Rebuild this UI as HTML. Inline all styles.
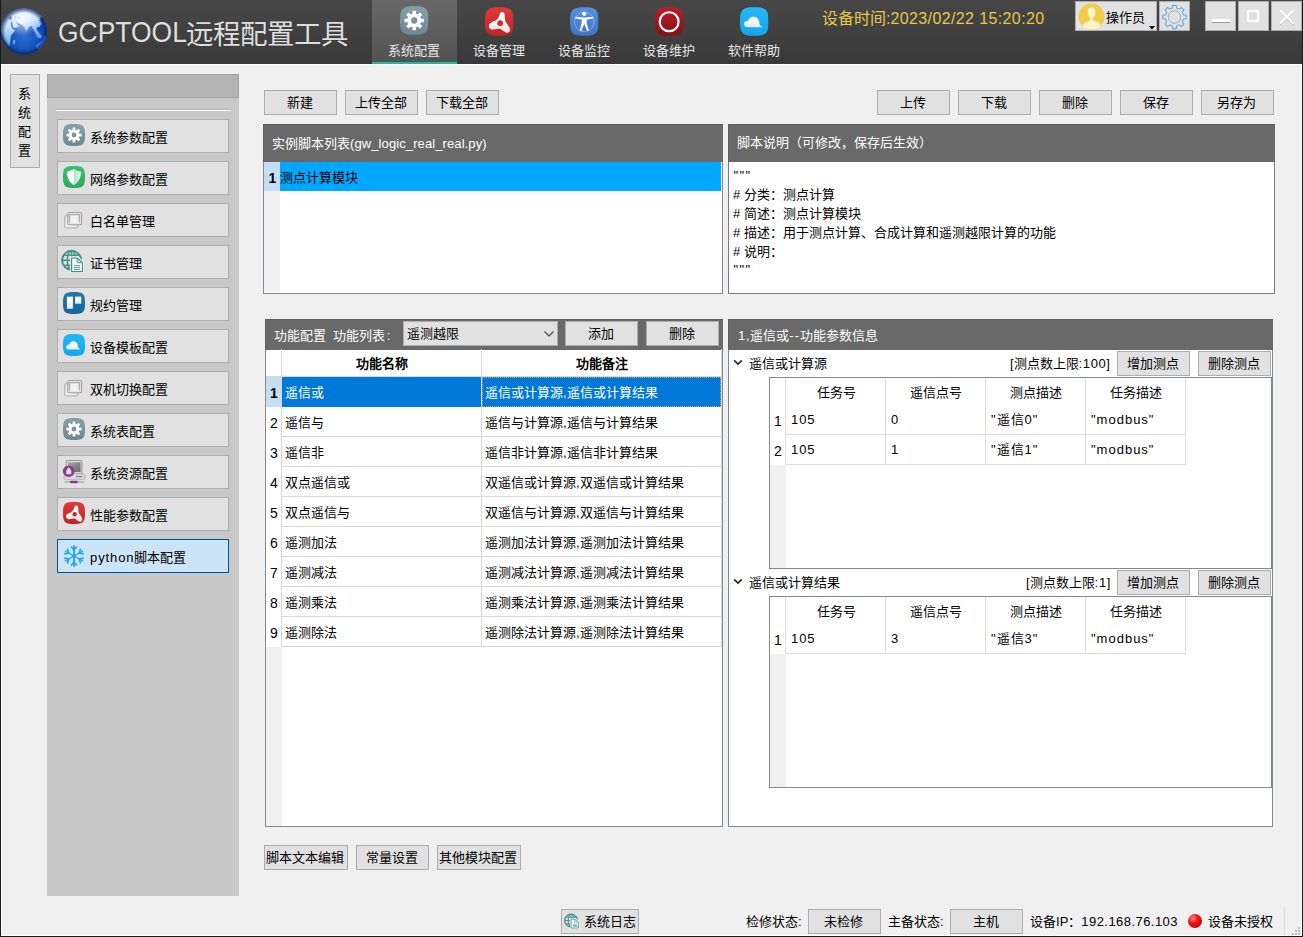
<!DOCTYPE html>
<html lang="zh-CN">
<head>
<meta charset="utf-8">
<title>GCPTOOL</title>
<style>
*{box-sizing:border-box;margin:0;padding:0}
html,body{width:1303px;height:937px;overflow:hidden}
body{position:relative;background:#f0f0f0;font-family:"Liberation Sans",sans-serif;font-size:13px;color:#000}
.a{position:absolute}
.t{position:absolute;white-space:nowrap;line-height:20px;height:20px}
/* window frame */
#frameL{left:0;top:0;width:1px;height:937px;background:#1a1a1a}
#frameR{left:1302px;top:0;width:1px;height:937px;background:#1a1a1a}
#frameB{left:0;top:936px;width:1303px;height:1px;background:#1a1a1a}
#inner{left:1px;top:64px;width:1301px;height:872px;border:1px solid #fff}
/* header */
#hdr{left:0;top:0;width:1303px;height:64px;background:linear-gradient(#474747,#393939)}
#title{left:58px;top:12px;font-size:29px;line-height:40px;height:40px;color:#dedede;transform:scaleX(0.912);transform-origin:0 50%}
#title2{left:185.5px;top:15px;font-size:27.5px;line-height:40px;height:40px;color:#dedede}
.tab{position:absolute;top:0;width:85px;height:64px}
.tab.on{background:linear-gradient(#686868,#535353);border-bottom:2px solid #1abc9c}
.tab .lbl{position:absolute;left:-1px;top:41px;width:85px;text-align:center;color:#e6e6e6;font-size:13px;line-height:20px}
.tab svg{position:absolute;left:28px;top:7px}
.tab.on svg{top:6px}
#time,#time2{top:8px;font-size:16px;line-height:22px;height:22px;color:#e8c84a}
.wb{position:absolute;top:1px;height:30px;background:#e1e1e1;border:1px solid #adadad}
/* generic button */
.btn{position:absolute;background:#e1e1e1;border:1px solid #adadad;text-align:center;white-space:nowrap;font-size:13px;line-height:24px;height:25px;width:73px;color:#000;padding-right:2px}
/* sidebar */
#vtab{left:10px;top:74px;width:30px;height:94px;background:#e1e1e1;border:1px solid #adadad;text-align:center;line-height:19px;padding-top:9px;padding-right:2px;font-size:13px}
#side{left:47px;top:74px;width:192px;height:822px;background:#c8c8c8}
#sidetop{left:47px;top:74px;width:192px;height:24px;background:#b4b4b4;border:1px solid #a2a2a2}
#sidehr{left:56px;top:109px;width:174px;height:2px;border-top:1px solid #b8b8b8;background:#fff}
.sb{position:absolute;left:57px;width:172px;height:34px;background:#e1e1e1;border:1px solid #adadad;font-size:13px;line-height:34px;padding-left:32px;padding-top:1px;white-space:nowrap;overflow:hidden}
.sb svg{position:absolute}
.sb.sel{background:#cce4f7;border-color:#005499}
/* panels */
.ph{position:absolute;background:#696969;color:#fff;font-size:13px;white-space:nowrap;box-shadow:inset 1px 1px 0 #5f5f5f}
.pb{position:absolute;background:#fff;border:1px solid #828790}

.rn{left:266px;width:16px;text-align:center;font-size:14px}
.c1{left:285px}.c2{left:485px}
.gv{width:1px;background:#dcdcdc}.gh{height:1px;background:#dcdcdc}
.h1{left:786px;width:100px;text-align:center}.h2{left:886px;width:100px;text-align:center}.h3{left:986px;width:100px;text-align:center}.h4{left:1086px;width:100px;text-align:center}
.r0{left:770px;width:16px;text-align:center;font-size:14px}
.d1{left:791px;letter-spacing:0.9px}.d2{left:891px}.d3{left:991px;letter-spacing:1px}.d4{left:1091px;letter-spacing:1px}
</style>
</head>
<body>
<!--DEFS--><svg width="0" height="0" style="position:absolute">
<defs>
<linearGradient id="gGear" x1="0" y1="0" x2="0" y2="1"><stop offset="0" stop-color="#88a0aa"/><stop offset="1" stop-color="#6d8892"/></linearGradient>
<linearGradient id="gRed" x1="0" y1="0" x2="0" y2="1"><stop offset="0" stop-color="#e03a3a"/><stop offset="1" stop-color="#bd2426"/></linearGradient>
<linearGradient id="gBlue" x1="0" y1="0" x2="0" y2="1"><stop offset="0" stop-color="#5690de"/><stop offset="1" stop-color="#3f74c6"/></linearGradient>
<linearGradient id="gDred" x1="0" y1="0" x2="0" y2="1"><stop offset="0" stop-color="#bb1d26"/><stop offset="1" stop-color="#861017"/></linearGradient>
<linearGradient id="gSky" x1="0" y1="0" x2="0" y2="1"><stop offset="0" stop-color="#22b8f8"/><stop offset="1" stop-color="#16a6e8"/></linearGradient>
<linearGradient id="gGreen" x1="0" y1="0" x2="0" y2="1"><stop offset="0" stop-color="#3abf72"/><stop offset="1" stop-color="#2daa60"/></linearGradient>
<linearGradient id="gTre" x1="0" y1="0" x2="0" y2="1"><stop offset="0" stop-color="#2079ad"/><stop offset="1" stop-color="#17669a"/></linearGradient>
<linearGradient id="gShR" x1="0" y1="0" x2="1" y2="0"><stop offset="0" stop-color="#a9e2c1"/><stop offset="1" stop-color="#f4fcf7"/></linearGradient>
<linearGradient id="gWb" x1="0" y1="0" x2="0" y2="1"><stop offset="0.3" stop-color="#fff"/><stop offset="1" stop-color="#d4ecfb"/></linearGradient>
<linearGradient id="gWr" x1="0" y1="0" x2="0" y2="1"><stop offset="0.35" stop-color="#fff"/><stop offset="1" stop-color="#f7dcdc"/></linearGradient>
<linearGradient id="gScr" x1="0" y1="0" x2="1" y2="1"><stop offset="0" stop-color="#a8a8a8"/><stop offset="1" stop-color="#6a6a6a"/></linearGradient>
<radialGradient id="gOcean" cx="0.5" cy="0.62" r="0.6"><stop offset="0" stop-color="#2d6fd2"/><stop offset="0.6" stop-color="#0f4db4"/><stop offset="1" stop-color="#083a96"/></radialGradient>
<linearGradient id="gLand" x1="0.2" y1="0" x2="0.75" y2="1"><stop offset="0" stop-color="#d2eaff"/><stop offset="0.4" stop-color="#bcdcff"/><stop offset="0.8" stop-color="#5e9af0"/><stop offset="1" stop-color="#4a8cf2"/></linearGradient>
<radialGradient id="gShine" cx="0.47" cy="0.2" r="0.4"><stop offset="0" stop-color="#fff" stop-opacity="0.9"/><stop offset="1" stop-color="#fff" stop-opacity="0"/></radialGradient>
<radialGradient id="gRim" cx="0.5" cy="0.5" r="0.5"><stop offset="0.8" stop-color="#04245f" stop-opacity="0"/><stop offset="1" stop-color="#04245f" stop-opacity="0.75"/></radialGradient>
<clipPath id="cGlobe"><circle cx="24" cy="24.5" r="23"/></clipPath>

<symbol id="i-gear" viewBox="0 0 28 28"><path d="M14.00 0 C25.76 0 28 2.24 28 14.00 C28 25.76 25.76 28 14.00 28 C2.24 28 0 25.76 0 14.00 C0 2.24 2.24 0 14.00 0Z" fill="url(#gGear)"/><g fill="#fff"><circle cx="14" cy="14" r="6.9"/><rect x="12.25" y="4.4" width="3.5" height="19.2" rx="0.6" transform="rotate(0.0 14 14)"/><rect x="12.25" y="4.4" width="3.5" height="19.2" rx="0.6" transform="rotate(45.0 14 14)"/><rect x="12.25" y="4.4" width="3.5" height="19.2" rx="0.6" transform="rotate(90.0 14 14)"/><rect x="12.25" y="4.4" width="3.5" height="19.2" rx="0.6" transform="rotate(135.0 14 14)"/></g><circle cx="14" cy="14" r="3.1" fill="#7a949e"/></symbol>

<symbol id="i-air" viewBox="0 0 28 28"><path d="M14.00 0 C25.76 0 28 2.24 28 14.00 C28 25.76 25.76 28 14.00 28 C2.24 28 0 25.76 0 14.00 C0 2.24 2.24 0 14.00 0Z" fill="url(#gRed)"/><path d="M16.30 4.90 C17.70 4.47 17.63 4.17 18.70 5.70 C19.77 7.23 19.10 6.97 19.50 9.50 C19.90 12.03 18.97 10.73 19.90 13.30 C20.83 15.87 20.80 14.53 22.30 17.20 C23.80 19.87 24.27 18.73 24.40 21.30 C24.53 23.87 24.57 24.07 22.70 24.90 C20.83 25.73 21.43 25.00 18.80 23.80 C16.17 22.60 17.73 22.00 14.80 21.30 C11.87 20.60 12.97 21.63 10.00 21.70 C7.03 21.77 7.93 22.63 5.90 21.50 C3.87 20.37 3.77 20.43 3.90 18.30 C4.03 16.17 4.13 16.83 6.30 15.10 C8.47 13.37 8.17 14.70 10.40 13.10 C12.63 11.50 11.63 12.33 13.00 10.30 C14.37 8.27 13.40 8.80 14.50 7.00 C15.60 5.20 14.90 5.33 16.30 4.90Z" fill="url(#gWr)"/><circle cx="14.9" cy="15.6" r="2.8" fill="#cf2c2e"/></symbol>

<symbol id="i-access" viewBox="0 0 28 28"><path d="M14.00 0 C25.76 0 28 2.24 28 14.00 C28 25.76 25.76 28 14.00 28 C2.24 28 0 25.76 0 14.00 C0 2.24 2.24 0 14.00 0Z" fill="url(#gBlue)"/><circle cx="14" cy="14.3" r="9.6" fill="none" stroke="#fff" stroke-opacity="0.45" stroke-width="0.7"/><g fill="#fff"><circle cx="14" cy="6.4" r="2.1"/><path d="M5.2 9.3 L13 10 L15 10 L22.8 9.3 L22.9 10.7 L16.3 12.3 L16.6 16 L18.6 23.2 L17.1 23.7 L14 16.5 L10.9 23.7 L9.4 23.2 L11.4 16 L11.7 12.3 L5.1 10.7Z"/></g></symbol>

<symbol id="i-o" viewBox="0 0 28 28"><path d="M14.00 0 C25.76 0 28 2.24 28 14.00 C28 25.76 25.76 28 14.00 28 C2.24 28 0 25.76 0 14.00 C0 2.24 2.24 0 14.00 0Z" fill="url(#gDred)"/><circle cx="13.9" cy="14.2" r="9.3" fill="none" stroke="#fff" stroke-width="2.1"/></symbol>

<symbol id="i-cloud" viewBox="0 0 28 28"><path d="M14.00 0 C25.76 0 28 2.24 28 14.00 C28 25.76 25.76 28 14.00 28 C2.24 28 0 25.76 0 14.00 C0 2.24 2.24 0 14.00 0Z" fill="url(#gSky)"/><path d="M7.4 19.6 C4.6 19.6 3.6 17.5 4.1 15.8 C4.6 14.1 6.3 13.3 7.9 13.7 C8.4 10.9 10.8 9.1 13.6 9.3 C16.8 9.5 18.9 12 19 15 C19 17 19.8 18.6 22.6 19.6Z" fill="url(#gWb)"/></symbol>

<symbol id="i-shield" viewBox="0 0 28 28"><path d="M14.00 0 C25.76 0 28 2.24 28 14.00 C28 25.76 25.76 28 14.00 28 C2.24 28 0 25.76 0 14.00 C0 2.24 2.24 0 14.00 0Z" fill="url(#gGreen)"/><path d="M14 3.9 C11.2 6 8 6.9 5 7.2 C5 14.5 8 20.5 14 24.3Z" fill="#fff"/><path d="M14 3.9 C16.8 6 20 6.9 23 7.2 C23 14.5 20 20.5 14 24.3Z" fill="url(#gShR)"/></symbol>

<symbol id="i-trello" viewBox="0 0 28 28"><path d="M14.00 0 C25.76 0 28 2.24 28 14.00 C28 25.76 25.76 28 14.00 28 C2.24 28 0 25.76 0 14.00 C0 2.24 2.24 0 14.00 0Z" fill="url(#gTre)"/><rect x="5" y="5.9" width="7.6" height="15.5" fill="url(#gWb)"/><rect x="15.3" y="5.9" width="7.9" height="9" fill="url(#gWb)"/></symbol>

<symbol id="i-squares" viewBox="0 0 22 22"><rect x="2.8" y="7.7" width="12.8" height="12.2" rx="1.2" fill="#ececec" stroke="#a9a9a9" stroke-width="1"/><rect x="5.8" y="4.5" width="13.8" height="12.2" rx="1.2" fill="#e4e4e4" stroke="#a2a2a2" stroke-width="1.1"/><rect x="7.6" y="6.8" width="9.8" height="8" fill="#f2f2f2"/><path d="M7.6 14.8 V6.6 H17.6 V14.5" fill="none" stroke="#acacac" stroke-width="1.1"/><path d="M16.4 7.4 V13.6" stroke="#dcdcdc" stroke-width="1.2"/></symbol>

<symbol id="i-cert" viewBox="0 0 24 24"><g fill="none" stroke="#46938e"><circle cx="10.6" cy="11.3" r="9.5" stroke-width="2"/><ellipse cx="10.6" cy="11.3" rx="4.3" ry="9.5" stroke-width="1.5"/><path d="M10.6 1.7 V21 M1 11.3 H20.2 M2.8 6.3 H18.4 M2.8 16.3 H18.4" stroke-width="1.5"/></g><path d="M10.3 8.6 H16.6 L21.9 13.4 V22.9 H10.3Z" fill="#fff" stroke="#fff" stroke-width="2.2"/><path d="M10.6 9.2 H16.2 L21.5 13.8 V22.6 H10.6Z" fill="#fff" stroke="#46938e" stroke-width="1.3"/><path d="M16.2 9.2 V13.8 H21.5" fill="none" stroke="#46938e" stroke-width="1"/><path d="M13 16.5 H19.2 M13 18.5 H19.2 M13 20.5 H19.2" stroke="#46938e" stroke-width="0.9" shape-rendering="crispEdges"/></symbol>

<symbol id="i-res" viewBox="0 0 24 25"><rect x="4.3" y="0.6" width="15.6" height="13.4" rx="0.6" fill="#e0e0e0" stroke="#8c8c8c" stroke-width="0.9"/><rect x="6" y="2.3" width="12.6" height="9.8" fill="url(#gScr)"/><path d="M2.2 13.9 H21.6 Q22.8 14 22.8 15.2 V18.6 Q22.6 19.6 21.4 19.6 H3 Q2.1 19.5 2.1 18.6Z" fill="#d9d9d9" stroke="#a8a8a8" stroke-width="0.7"/><rect x="13.9" y="16.2" width="6.2" height="1" fill="#6e6e6e"/><path d="M2.4 22 H22.2" stroke="#9c9c9c" stroke-width="1"/><rect x="8" y="20.8" width="7.8" height="2.5" rx="1.25" fill="#86358c"/><circle cx="6.7" cy="11.2" r="5.8" fill="#843488"/><circle cx="6.7" cy="11.2" r="4.9" fill="none" stroke="#96509b" stroke-width="0.7"/><path d="M4.5 10.3 h4.5 v3.6 h-4.5Z M5.4 10.3 v-1 a1.35 1.35 0 0 1 2.7 0 v1" fill="#eddcef" stroke="#eddcef" stroke-width="0.6"/></symbol>

<symbol id="i-snow" viewBox="0 0 28 28"><g stroke="#1ea4e9" fill="none" stroke-linecap="round"><g transform="rotate(0 14 14)"><path d="M14 14 L14 1.2" stroke-width="2.3"/><path d="M14 6.2 L10.6 2.6 M14 6.2 L17.4 2.6" stroke-width="2.1"/></g><g transform="rotate(60 14 14)"><path d="M14 14 L14 1.2" stroke-width="1.7"/><path d="M14 6.2 L10.6 2.6 M14 6.2 L17.4 2.6" stroke-width="2.1"/></g><g transform="rotate(120 14 14)"><path d="M14 14 L14 1.2" stroke-width="1.7"/><path d="M14 6.2 L10.6 2.6 M14 6.2 L17.4 2.6" stroke-width="2.1"/></g><g transform="rotate(180 14 14)"><path d="M14 14 L14 1.2" stroke-width="2.3"/><path d="M14 6.2 L10.6 2.6 M14 6.2 L17.4 2.6" stroke-width="2.1"/></g><g transform="rotate(240 14 14)"><path d="M14 14 L14 1.2" stroke-width="1.7"/><path d="M14 6.2 L10.6 2.6 M14 6.2 L17.4 2.6" stroke-width="2.1"/></g><g transform="rotate(300 14 14)"><path d="M14 14 L14 1.2" stroke-width="1.7"/><path d="M14 6.2 L10.6 2.6 M14 6.2 L17.4 2.6" stroke-width="2.1"/></g></g><circle cx="14" cy="14" r="2" fill="#1ea4e9"/></symbol>

<symbol id="i-globe" viewBox="0 0 48 49"><circle cx="24" cy="24.5" r="23" fill="url(#gOcean)"/><g clip-path="url(#cGlobe)"><path d="M0.0 0.5 L54.0 0.5 L54.0 14.3 L40.3 10.5 L41.8 16.0 L39.8 20.1 L36.9 20.6 L38.0 24.1 L40.3 27.0 L42.7 29.3 L40.3 31.6 L37.5 31.0 L35.2 27.0 L33.4 22.9 L31.4 19.2 L28.8 20.6 L26.6 25.4 L24.5 21.5 L22.2 17.9 L19.9 17.2 L17.3 16.0 L16.1 15.0 L17.6 17.2 L19.3 19.5 L16.7 20.7 L13.8 21.5 L12.6 19.8 L11.9 15.3 L11.2 15.3 L11.8 20.1 L13.1 21.9 L15.7 23.1 L13.8 25.8 L11.2 28.7 L10.7 33.9 L10.1 38.5 L8.1 39.4 L3.5 32.7 L0.0 22.9Z" fill="url(#gLand)" stroke="#1b4fa6" stroke-width="0.6"/><path d="M13.4 33.3 L14.9 32.6 L15.1 35.0 L14.1 37.6 L13.1 36.8Z" fill="#7fb4ff"/><path d="M35.6 40.8 L36.9 37.3 L40.3 35.0 L43.2 32.2 L44.7 28.4 L46.1 29.3 L47.3 33.9 L40.3 43.1Z" fill="#3f7dff"/><path d="M38.5 14 L40.8 12.8 L40 16.5 M36.5 23 L39 21.5 M39.5 26 L41.2 24.6 L42.3 27.5" stroke="#1b4fa6" stroke-width="1" fill="none" opacity="0.7"/><path d="M9 10.5 l2 -1 l1 2 l-2 1.2Z M15 10 l0.8 0 l0 1.2 M18.5 9.8 l1 0 l-0.4 2.2" fill="#2a62c0" stroke="#2a62c0" stroke-width="0.6"/><circle cx="24" cy="24.5" r="23" fill="url(#gShine)"/></g><circle cx="24" cy="24.5" r="23" fill="url(#gRim)"/></symbol>
</defs></svg><!--/DEFS-->
<!-- HEADER -->
<div id="hdr" class="a"></div>
<svg id="globe" class="a" style="left:0;top:7px" width="48" height="49"><use href="#i-globe"/></svg>
<div id="title" class="t">GCPTOOL</div><div id="title2" class="t">远程配置工具</div>

<div class="tab on" style="left:372px"><svg width="28.5" height="29" style=""><use href="#i-gear"/></svg><div class="lbl">系统配置</div></div>
<div class="tab" style="left:457px"><svg width="28.5" height="29" style=""><use href="#i-air"/></svg><div class="lbl">设备管理</div></div>
<div class="tab" style="left:542px"><svg width="28.5" height="29" style=""><use href="#i-access"/></svg><div class="lbl">设备监控</div></div>
<div class="tab" style="left:627px"><svg width="28.5" height="29" style=""><use href="#i-o"/></svg><div class="lbl">设备维护</div></div>
<div class="tab" style="left:712px"><svg width="28.5" height="29" style=""><use href="#i-cloud"/></svg><div class="lbl">软件帮助</div></div>

<div id="time" class="t" style="left:auto;right:412.5px">设备时间:</div><div id="time2" class="t" style="left:890.5px;letter-spacing:0.38px">2023/02/22 15:20:20</div>

<div class="wb" style="left:1075px;width:82px"><svg class="a" style="left:2px;top:1px" width="27" height="27" viewBox="0 0 27 27"><defs><clipPath id="cAv"><circle cx="13.5" cy="13.5" r="13"/></clipPath></defs><circle cx="13.5" cy="13.5" r="13" fill="#f0cd48"/><g clip-path="url(#cAv)"><path d="M13.6 4.2 C16.4 4.2 17.6 6.4 17.4 9.2 C17.2 11.8 16.3 13.3 15.6 14.4 L15.8 17.2 C18.2 18.4 21.2 18.8 22.6 21.2 L22.6 27 L4.6 27 L4.6 21.2 C6 18.8 9 18.4 11.4 17.2 L11.6 14.4 C10.9 13.3 10 11.8 9.8 9.2 C9.6 6.4 10.8 4.2 13.6 4.2Z" fill="#fff4c4"/><path d="M4.6 21.5 C8 19.2 10.8 18.6 11.4 17.2 L11.55 15 C12.6 16.6 14.6 16.6 15.65 15 L15.8 17.2 C16.4 18.6 19.2 19.2 22.6 21.5" fill="none" stroke="#b59a3a" stroke-opacity="0.35" stroke-width="0.9"/></g></svg><div class="t" style="left:30px;top:6px;font-size:13px">操作员</div><svg class="a" style="left:73px;top:24px" width="6" height="4" viewBox="0 0 6 4"><path d="M0 0 H6 L3 3.4Z" fill="#000"/></svg></div>
<div class="wb" style="left:1159px;width:31px"><svg class="a" style="left:-1px;top:0" width="31" height="30" viewBox="0 0 31 30"><path d="M13.35 6.05 L13.75 3.33 L17.25 3.33 L17.65 6.05 L20.31 7.16 L22.51 5.51 L24.99 7.99 L23.34 10.19 L24.45 12.85 L27.17 13.25 L27.17 16.75 L24.45 17.15 L23.34 19.81 L24.99 22.01 L22.51 24.49 L20.31 22.84 L17.65 23.95 L17.25 26.67 L13.75 26.67 L13.35 23.95 L10.69 22.84 L8.49 24.49 L6.01 22.01 L7.66 19.81 L6.55 17.15 L3.83 16.75 L3.83 13.25 L6.55 12.85 L7.66 10.19 L6.01 7.99 L8.49 5.51 L10.69 7.16Z" fill="none" stroke="#62ace6" stroke-width="1.1" stroke-linejoin="round"/><circle cx="15.5" cy="15" r="6.2" fill="none" stroke="#9aa3ac" stroke-width="0.9"/></svg></div>
<div class="wb" style="left:1205px;width:31px"><div class="a" style="left:6px;top:17px;width:18px;height:3px;background:#fff;border-bottom:1px solid #9a9a9a;box-sizing:content-box"></div></div>
<div class="wb" style="left:1238px;width:31px"><div class="a" style="left:8px;top:8px;width:12px;height:12px;border:2px solid #fff"></div></div>
<div class="wb" style="left:1271px;width:31px"><svg class="a" style="left:6px;top:7px" width="18" height="17" viewBox="0 0 18 17"><path d="M2 2.3 L15.6 15.6 M15.6 2.3 L2 15.6" stroke="#a8a8a8" stroke-width="1.6" fill="none"/><path d="M2 1.5 L15.6 14.8 M15.6 1.5 L2 14.8" stroke="#fff" stroke-width="2" fill="none"/></svg></div>

<!-- FRAME -->
<div id="inner" class="a"></div>
<div id="frameL" class="a"></div><div id="frameR" class="a"></div><div id="frameB" class="a"></div>

<!-- SIDEBAR -->
<div id="vtab" class="a">系<br>统<br>配<br>置</div>
<div id="side" class="a"></div>
<div id="sidetop" class="a"></div>
<div id="sidehr" class="a"></div>
<div class="sb" style="top:119px"><svg width="22" height="22" style="left:5px;top:4px"><use href="#i-gear"/></svg>系统参数配置</div>
<div class="sb" style="top:161px"><svg width="22" height="22" style="left:5px;top:4px"><use href="#i-shield"/></svg>网络参数配置</div>
<div class="sb" style="top:203px"><svg width="22" height="22" style="left:4px;top:4px"><use href="#i-squares"/></svg>白名单管理</div>
<div class="sb" style="top:245px"><svg width="24" height="24" style="left:3px;top:3px"><use href="#i-cert"/></svg>证书管理</div>
<div class="sb" style="top:287px"><svg width="22" height="22" style="left:5px;top:4px"><use href="#i-trello"/></svg>规约管理</div>
<div class="sb" style="top:329px"><svg width="22" height="22" style="left:5px;top:4px"><use href="#i-cloud"/></svg>设备模板配置</div>
<div class="sb" style="top:371px"><svg width="22" height="22" style="left:4px;top:4px"><use href="#i-squares"/></svg>双机切换配置</div>
<div class="sb" style="top:413px"><svg width="22" height="22" style="left:5px;top:4px"><use href="#i-gear"/></svg>系统表配置</div>
<div class="sb" style="top:455px"><svg width="24" height="25" style="left:4px;top:4px"><use href="#i-res"/></svg>系统资源配置</div>
<div class="sb" style="top:497px"><svg width="22" height="22" style="left:5px;top:4px"><use href="#i-air"/></svg>性能参数配置</div>
<div class="sb sel" style="top:539px"><svg width="22" height="22" style="left:5px;top:5px"><use href="#i-snow"/></svg><span style="letter-spacing:0.9px">python</span>脚本配置</div>

<!-- MAIN -->
<!-- toolbar -->
<div class="btn" style="left:264px;top:90px">新建</div>
<div class="btn" style="left:345px;top:90px">上传全部</div>
<div class="btn" style="left:426px;top:90px">下载全部</div>
<div class="btn" style="left:877px;top:90px">上传</div>
<div class="btn" style="left:958px;top:90px">下载</div>
<div class="btn" style="left:1039px;top:90px">删除</div>
<div class="btn" style="left:1120px;top:90px">保存</div>
<div class="btn" style="left:1201px;top:90px">另存为</div>

<!-- script list panel -->
<div class="ph" style="left:263px;top:124px;width:460px;height:38px;line-height:40px;padding-left:9px"><span class="a" style="right:373px;top:0">实例脚本列表</span><span class="a" style="left:87px;top:0;letter-spacing:0.1px">(gw_logic_real_real.py)</span></div>
<div class="pb" style="left:263px;top:162px;width:460px;height:132px;border-top:none"></div>
<div class="a" style="left:264px;top:162px;width:16px;height:130px;background:#f0f0f0"></div>
<div class="a" style="left:264px;top:162px;width:16px;height:29px;background:#c3def5"></div>
<div class="a" style="left:280px;top:162px;width:441px;height:29px;background:#00a8ff"></div>
<div class="t" style="left:264.5px;top:168px;width:16px;text-align:center;font-weight:bold;font-size:14px">1</div>
<div class="t" style="left:280px;top:168px">测点计算模块</div>

<!-- script description panel -->
<div class="ph" style="left:728px;top:124px;width:547px;height:38px;line-height:38px;padding-left:9px">脚本说明（可修改，保存后生效）</div>
<div class="pb" style="left:728px;top:162px;width:547px;height:132px;border-top:none;border-color:#7a7a7a"></div>
<div class="t" style="left:733.5px;top:166px;letter-spacing:1.4px">"""</div>
<div class="t" style="left:733px;top:185px"># 分类：测点计算</div>
<div class="t" style="left:733px;top:204px"># 简述：测点计算模块</div>
<div class="t" style="left:733px;top:223px"># 描述：用于测点计算、合成计算和遥测越限计算的功能</div>
<div class="t" style="left:733px;top:242px"># 说明：</div>
<div class="t" style="left:733.5px;top:260px;letter-spacing:1.4px">"""</div>

<!-- function config panel -->
<div class="ph" style="left:265px;top:319px;width:458px;height:31px;line-height:33px;padding-left:9px;word-spacing:3px">功能配置 功能列表<span style="margin-left:2px">:</span></div>
<div class="a" style="left:403px;top:321px;width:155px;height:25px;background:#e1e1e1;border:1px solid #adadad;line-height:23px;padding-left:3px">遥测越限</div>
<svg class="a" style="left:543px;top:329px" width="12" height="10" viewBox="0 0 12 10"><path d="M1.5 2.5 L6 7 L10.5 2.5" fill="none" stroke="#444" stroke-width="1.2"/></svg>
<div class="btn" style="left:565px;top:321px">添加</div>
<div class="btn" style="left:646px;top:321px">删除</div>
<div class="pb" style="left:265px;top:350px;width:458px;height:477px;border-top:none"></div>
<!-- table -->
<div class="a" style="left:266px;top:647px;width:16px;height:179px;background:#f0f0f0"></div>
<div class="a" style="left:266px;top:377px;width:16px;height:30px;background:#c3def5"></div>
<div class="a" style="left:282px;top:377px;width:439px;height:30px;background:#0078d7"></div>
<div class="a" style="left:482px;top:377px;width:239px;height:30px;border:1px dotted #e8a33d"></div>
<!-- grid lines -->
<div class="a" style="left:281px;top:349px;width:1px;height:298px;background:#d8d8d8"></div>
<div class="a" style="left:481px;top:349px;width:1px;height:298px;background:#d8d8d8"></div>
<div class="a" style="left:721px;top:349px;width:1px;height:298px;background:#d8d8d8"></div>
<div class="a" style="left:266px;top:376px;width:456px;height:1px;background:#d8d8d8"></div>
<div class="a" style="left:282px;top:436px;width:440px;height:1px;background:#d8d8d8"></div>
<div class="a" style="left:282px;top:466px;width:440px;height:1px;background:#d8d8d8"></div>
<div class="a" style="left:282px;top:496px;width:440px;height:1px;background:#d8d8d8"></div>
<div class="a" style="left:282px;top:526px;width:440px;height:1px;background:#d8d8d8"></div>
<div class="a" style="left:282px;top:556px;width:440px;height:1px;background:#d8d8d8"></div>
<div class="a" style="left:282px;top:586px;width:440px;height:1px;background:#d8d8d8"></div>
<div class="a" style="left:282px;top:616px;width:440px;height:1px;background:#d8d8d8"></div>
<div class="a" style="left:282px;top:646px;width:440px;height:1px;background:#d8d8d8"></div>
<div class="t" style="left:282px;top:354px;width:200px;text-align:center;font-weight:bold">功能名称</div>
<div class="t" style="left:482px;top:354px;width:239px;text-align:center;font-weight:bold">功能备注</div>
<div class="t rn" style="top:383px;font-weight:bold">1</div>
<div class="t c1" style="top:383px;color:#fff">遥信或</div><div class="t c2" style="top:383px;color:#fff">遥信或计算源,遥信或计算结果</div>
<div class="t rn" style="top:413px">2</div><div class="t c1" style="top:413px">遥信与</div><div class="t c2" style="top:413px">遥信与计算源,遥信与计算结果</div>
<div class="t rn" style="top:443px">3</div><div class="t c1" style="top:443px">遥信非</div><div class="t c2" style="top:443px">遥信非计算源,遥信非计算结果</div>
<div class="t rn" style="top:473px">4</div><div class="t c1" style="top:473px">双点遥信或</div><div class="t c2" style="top:473px">双遥信或计算源,双遥信或计算结果</div>
<div class="t rn" style="top:503px">5</div><div class="t c1" style="top:503px">双点遥信与</div><div class="t c2" style="top:503px">双遥信与计算源,双遥信与计算结果</div>
<div class="t rn" style="top:533px">6</div><div class="t c1" style="top:533px">遥测加法</div><div class="t c2" style="top:533px">遥测加法计算源,遥测加法计算结果</div>
<div class="t rn" style="top:563px">7</div><div class="t c1" style="top:563px">遥测减法</div><div class="t c2" style="top:563px">遥测减法计算源,遥测减法计算结果</div>
<div class="t rn" style="top:593px">8</div><div class="t c1" style="top:593px">遥测乘法</div><div class="t c2" style="top:593px">遥测乘法计算源,遥测乘法计算结果</div>
<div class="t rn" style="top:623px">9</div><div class="t c1" style="top:623px">遥测除法</div><div class="t c2" style="top:623px">遥测除法计算源,遥测除法计算结果</div>

<!-- bottom buttons -->
<div class="btn" style="left:264px;top:845px;width:84px">脚本文本编辑</div>
<div class="btn" style="left:356px;top:845px">常量设置</div>
<div class="btn" style="left:437px;top:845px;width:84px">其他模块配置</div>

<!-- param panel -->
<div class="ph" style="left:728px;top:319px;width:545px;height:31px;line-height:33px;padding-left:10px"><span style="letter-spacing:0.7px">1,</span>遥信或<span style="letter-spacing:1.2px">--</span>功能参数信息</div>
<div class="pb" style="left:728px;top:350px;width:545px;height:477px;border-top:none"></div>

<svg class="a" style="left:733px;top:359px" width="10" height="7" viewBox="0 0 10 7"><path d="M1.2 1.3 L5 5.1 L8.8 1.3" fill="none" stroke="#2a2a2a" stroke-width="1.7"/></svg>
<div class="t" style="left:749px;top:354px">遥信或计算源</div>
<div class="t" style="right:224.4px;top:354px">[测点数上限</div><div class="t" style="left:1078.6px;top:354px;letter-spacing:0.6px">:100]</div>
<div class="btn" style="left:1117px;top:351px">增加测点</div>
<div class="btn" style="left:1198px;top:351px">删除测点</div>
<div class="pb" style="left:769px;top:377px;width:503px;height:192px"></div>
<div class="a" style="left:770px;top:465px;width:16px;height:103px;background:#f0f0f0"></div>
<div class="a gv" style="left:785px;top:378px;height:87px"></div>
<div class="a gv" style="left:885px;top:378px;height:87px"></div>
<div class="a gv" style="left:985px;top:378px;height:87px"></div>
<div class="a gv" style="left:1085px;top:378px;height:87px"></div>
<div class="a gv" style="left:1185px;top:378px;height:87px"></div>
<div class="a gh" style="left:786px;top:434px;width:400px"></div>
<div class="a gh" style="left:786px;top:464px;width:400px"></div>
<div class="t h1" style="top:383px">任务号</div><div class="t h2" style="top:383px">遥信点号</div><div class="t h3" style="top:383px">测点描述</div><div class="t h4" style="top:383px">任务描述</div>
<div class="t r0" style="top:411px">1</div><div class="t d1" style="top:410px">105</div><div class="t d2" style="top:410px">0</div><div class="t d3" style="top:410px">"遥信0"</div><div class="t d4" style="top:410px">"modbus"</div>
<div class="t r0" style="top:441px">2</div><div class="t d1" style="top:440px">105</div><div class="t d2" style="top:440px">1</div><div class="t d3" style="top:440px">"遥信1"</div><div class="t d4" style="top:440px">"modbus"</div>

<svg class="a" style="left:733px;top:578px" width="10" height="7" viewBox="0 0 10 7"><path d="M1.2 1.3 L5 5.1 L8.8 1.3" fill="none" stroke="#2a2a2a" stroke-width="1.7"/></svg>
<div class="t" style="left:749px;top:573px">遥信或计算结果</div>
<div class="t" style="right:208.4px;top:573px">[测点数上限</div><div class="t" style="left:1094.6px;top:573px;letter-spacing:0.7px">:1]</div>
<div class="btn" style="left:1117px;top:570px">增加测点</div>
<div class="btn" style="left:1198px;top:570px">删除测点</div>
<div class="pb" style="left:769px;top:596px;width:503px;height:192px"></div>
<div class="a" style="left:770px;top:654px;width:16px;height:133px;background:#f0f0f0"></div>
<div class="a gv" style="left:785px;top:597px;height:57px"></div>
<div class="a gv" style="left:885px;top:597px;height:57px"></div>
<div class="a gv" style="left:985px;top:597px;height:57px"></div>
<div class="a gv" style="left:1085px;top:597px;height:57px"></div>
<div class="a gv" style="left:1185px;top:597px;height:57px"></div>
<div class="a gh" style="left:786px;top:653px;width:400px"></div>
<div class="t h1" style="top:602px">任务号</div><div class="t h2" style="top:602px">遥信点号</div><div class="t h3" style="top:602px">测点描述</div><div class="t h4" style="top:602px">任务描述</div>
<div class="t r0" style="top:630px">1</div><div class="t d1" style="top:629px">105</div><div class="t d2" style="top:629px">3</div><div class="t d3" style="top:629px">"遥信3"</div><div class="t d4" style="top:629px">"modbus"</div>

<!-- status bar -->
<div class="btn" style="left:561px;top:909px;width:78px;text-align:left;padding-left:22px"><svg class="a" style="left:2px;top:3px" width="16" height="16"><use href="#i-cert"/></svg>系统日志</div>
<div class="t" style="left:746px;top:912px">检修状态:</div>
<div class="btn" style="left:808px;top:909px">未检修</div>
<div class="t" style="left:888px;top:912px">主备状态:</div>
<div class="btn" style="left:950px;top:909px">主机</div>
<div class="t" style="right:221.7px;top:912px">设备IP：</div><div class="t" style="left:1081.3px;top:912px;letter-spacing:0.45px">192.168.76.103</div>
<div class="a" style="left:1188px;top:914px;width:14px;height:14px;border-radius:50%;background:radial-gradient(circle at 35% 30%,#ff8a8a 0,#f01818 35%,#c80000 80%)"></div>
<div class="t" style="left:1208px;top:912px">设备未授权</div>
<div class="a" style="left:1284px;top:907px;width:1px;height:28px;background:#d9d9d9"></div>
<div class="a" style="left:1298px;top:927px;width:2px;height:2px;background:#bdbdbd"></div><div class="a" style="left:1295px;top:930px;width:2px;height:2px;background:#bdbdbd"></div><div class="a" style="left:1298px;top:930px;width:2px;height:2px;background:#bdbdbd"></div><div class="a" style="left:1292px;top:933px;width:2px;height:2px;background:#bdbdbd"></div><div class="a" style="left:1295px;top:933px;width:2px;height:2px;background:#bdbdbd"></div><div class="a" style="left:1298px;top:933px;width:2px;height:2px;background:#bdbdbd"></div>


</body>
</html>
